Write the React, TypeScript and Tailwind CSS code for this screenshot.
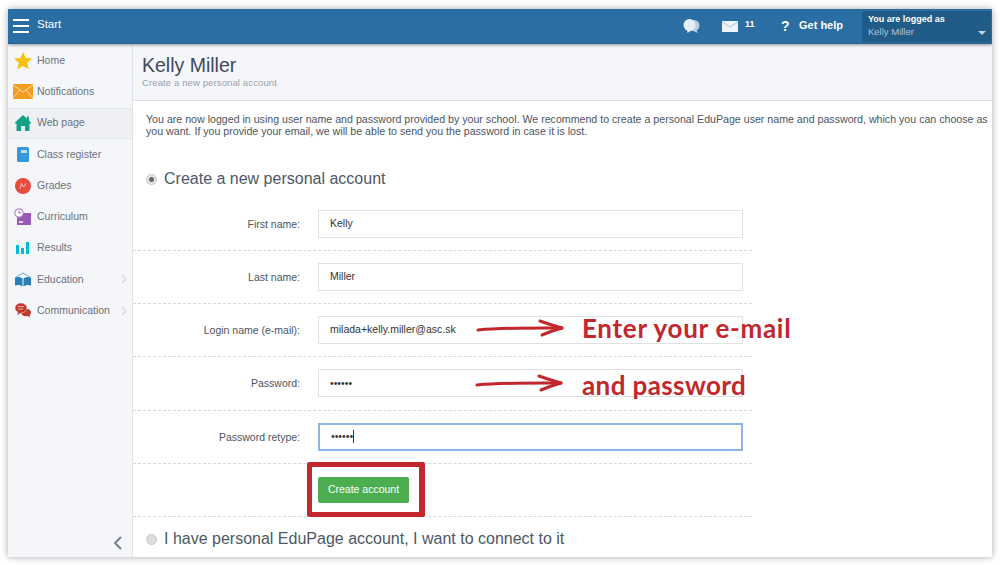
import React from "react";

const F = "font-['Liberation_Sans',Arial,sans-serif]";

function Star() {
  return <svg width="20" height="20" viewBox="0 0 20 20"><path d="M10 1l2.700 6 6.300.6-4.800 4.300 1.500 6.400L10 15l-5.700 3.300 1.500-6.400L1 7.600l6.300-.6z" fill="#f5c211" /></svg>;
}
function Mail() {
  return <svg width="20" height="15" viewBox="0 0 20 15"><rect width="20" height="15" fill="#f39c1f" /><path d="M0 1l10 7 10-7M0 14l7-8M20 14l-7-8" stroke="#fbdca8" strokeWidth="1" fill="none" /></svg>;
}
function House() {
  return <svg width="16" height="16" viewBox="0 0 16 16"><path d="M8 0L0 7.500v1h1.500V16h4.500v-5h4v5h4.500V8.500H16v-1l-2-1.900V1.500h-2v2.200z" fill="#16a085" /><rect x="6.500" y="11" width="3" height="5" fill="#d9efe9" /></svg>;
}
function Book() {
  return <svg width="12" height="15" viewBox="0 0 12 15"><rect x="0" width="12" height="15" rx="1.500" fill="#3498db" /><rect x="4" y="3" width="6" height="3" fill="#bcdcf3" /></svg>;
}
function Grades() {
  return <svg width="16" height="16" viewBox="0 0 16 16"><circle cx="8" cy="8" r="8" fill="#e74c3c" /><path d="M5 11L6.500 5.500l2 3.500L11 5.500" stroke="#f7c1ba" strokeWidth="1" fill="none" /></svg>;
}
function Curriculum() {
  return <svg width="17" height="17" viewBox="0 0 17 17"><rect x="3" y="5" width="14" height="12" fill="#9b59b6" /><rect x="5" y="13" width="4" height="2" fill="#e6d5ee" /><circle cx="5" cy="5" r="4.200" fill="#fff" stroke="#b28ac6" strokeWidth="1.200" /><path d="M5 2.800V5h2" stroke="#9b59b6" strokeWidth="1" fill="none" /></svg>;
}
function Results() {
  return <svg width="13" height="12" viewBox="0 0 13 12"><rect y="3" width="3" height="9" fill="#00bcd4" /><rect x="5" y="6" width="3" height="6" fill="#00bcd4" /><rect x="10" width="3" height="12" fill="#00bcd4" /></svg>;
}
function Education() {
  return <svg width="16" height="15" viewBox="0 0 16 15"><path d="M1 5l7-4 7 4" stroke="#6fa8d2" strokeWidth="1" fill="none" /><path d="M0 5.500c3-1 6-.5 7.500 1v8c-1.500-1.500-4.500-2-7.500-1zM16 5.500c-3-1-6-.5-7.500 1v8c1.500-1.500 4.500-2 7.500-1z" fill="#2980b9" /></svg>;
}
function Comm() {
  return <svg width="16" height="15" viewBox="0 0 16 15"><ellipse cx="11" cy="9.500" rx="5" ry="3.800" fill="#c0392b" /><path d="M12 12l2.500 2.500L15 10z" fill="#c0392b" /><ellipse cx="6" cy="5" rx="6" ry="5" fill="#c0392b" stroke="#f5f6f9" strokeWidth="0.500" /><path d="M3 8.500L2.500 12 7 9z" fill="#c0392b" /><path d="M3 3.500h6M3 6h5" stroke="#eab5ad" strokeWidth="1" /></svg>;
}

const nav = [
  { label: "Home", icon: <Star /> },
  { label: "Notifications", icon: <Mail /> },
  { label: "Web page", icon: <House />, active: true },
  { label: "Class register", icon: <Book /> },
  { label: "Grades", icon: <Grades /> },
  { label: "Curriculum", icon: <Curriculum /> },
  { label: "Results", icon: <Results /> },
  { label: "Education", icon: <Education />, arrow: true },
  { label: "Communication", icon: <Comm />, arrow: true },
];

const fields = [
  { label: "First name:", value: "Kelly" },
  { label: "Last name:", value: "Miller" },
  { label: "Login name (e-mail):", value: "milada+kelly.miller@asc.sk" },
  { label: "Password:", value: "••••••" },
  { label: "Password retype:", value: "••••••", focus: true },
];

function Arrow() {
  return (
    <svg width="90" height="20" viewBox="0 0 90 20" fill="none" stroke="#c1272d" strokeLinecap="round" strokeLinejoin="round">
      <path d="M2 12C30 9.500 60 10 86 10" strokeWidth="3" />
      <path d="M64 3c8 3 15 5 22 7-7 2-13 4-20 7" strokeWidth="3" />
    </svg>
  );
}

export default function App() {
  return (
    <div className={`${F} w-[1000px] h-[565px] bg-white pl-2 pr-2 pt-[9px] pb-2 overflow-hidden`}>
      <div className="relative w-[984px] h-[548px] flex flex-col bg-white shadow-[0_0_7px_rgba(0,0,0,0.35)] overflow-hidden">
        <header className="h-[35px] shrink-0 bg-[#2a6ea3] border-b border-[#245f8d] shadow-[0_1px_3px_rgba(0,0,0,0.4)] z-10 flex items-center text-white">
          <div className="ml-[5px] w-[16px] flex flex-col gap-[4px]">
            <span className="h-[2px] bg-white" />
            <span className="h-[2px] bg-white" />
            <span className="h-[2px] bg-white" />
          </div>
          <span className="ml-[8px] mb-[2px] text-[11.500px]">Start</span>
          <div className="ml-auto flex items-center h-full">
            <svg width="17" height="15" viewBox="0 0 17 15" className="mr-[22px]">
              <circle cx="11" cy="6.500" r="5.500" fill="#b5cfe2" />
              <path d="M13 10l2 4-5-2z" fill="#b5cfe2" />
              <circle cx="6.500" cy="6" r="6" fill="#e6eff5" />
              <path d="M4 10L4.500 14 9 11z" fill="#e6eff5" />
            </svg>
            <svg width="16" height="11" viewBox="0 0 16 11">
              <rect width="16" height="11" fill="#eef4f8" />
              <path d="M0 1l8 5 8-5" stroke="#a9c4d8" strokeWidth="1" fill="none" />
            </svg>
            <span className="ml-[7px] mb-[2px] text-[9px] font-bold w-[36px]">11</span>
            <span className="text-[14px] font-bold w-[18px]">?</span>
            <span className="mb-[2px] text-[11px] font-bold">Get help</span>
            <div className="ml-[19px] mr-[1px] w-[129px] h-[31px] bg-[#215b87] rounded-[2px] px-[6px] pt-[2px] relative">
              <div className="text-[9px] font-bold leading-[12px]">You are logged as</div>
              <div className="text-[9.500px] leading-[13px] text-[#a9c6dc]">Kelly Miller</div>
              <span className="absolute right-[5px] bottom-[7px] w-0 h-0 border-x-[4px] border-x-transparent border-t-[4px] border-t-[#c5d6e3]" />
            </div>
          </div>
        </header>
        <div className="flex flex-1 min-h-0">
          <aside className="relative w-[125px] shrink-0 bg-[#f5f6f9] border-r border-[#dfe2e6] pt-[1px]">
            {nav.map((n) => (
              <div key={n.label} className={`h-[31.250px] flex items-center ${n.active ? "bg-[#eef0f4] border-y border-[#e4e7eb]" : ""}`}>
                <span className="w-[29px] flex justify-center shrink-0">{n.icon}</span>
                <span className="text-[10.500px] text-[#6b7280]">{n.label}</span>
                {n.arrow && (
                  <svg width="6" height="10" viewBox="0 0 6 10" className="ml-auto mr-[5px]" fill="none" stroke="#d5d8dc" strokeWidth="1.200">
                    <path d="M1 1l4 4-4 4" />
                  </svg>
                )}
              </div>
            ))}
            <svg width="10" height="14" viewBox="0 0 10 14" className="absolute right-[9px] bottom-[7px]" fill="none" stroke="#6d7b8a" strokeWidth="1.800">
              <path d="M8 1L2 7l6 6" />
            </svg>
          </aside>
          <main className="flex-1 min-w-0 relative">
            <div className="h-[57px] bg-[#f5f6f9] border-b border-[#dcdfe3] pl-[9px] pt-[10px]">
              <div className="text-[19.500px] leading-[23px] text-[#3f4a59]">Kelly Miller</div>
              <div className="text-[9.500px] leading-[11px] text-[#97a1ad] tracking-[0.120px]">Create a new personal account</div>
            </div>
            <p className="pl-[13px] pr-0 pt-[12px] text-[10.630px] leading-[12px] text-[#4b5563] w-[860px]">
              You are now logged in using user name and password provided by your school. We recommend to create a personal EduPage user name and password, which you can choose as you want. If you provide your email, we will be able to send you the password in case it is lost.
            </p>
            <div className="mt-[32px] pl-[13px] flex items-center h-[20px]">
              <span className="w-[11px] h-[11px] rounded-full bg-[#e4e5e6] border border-[#c8c9cb] flex items-center justify-center">
                <span className="w-[5px] h-[5px] rounded-full bg-[#666]" />
              </span>
              <span className="ml-[7px] text-[16px] text-[#4d5866]">Create a new personal account</span>
            </div>
            <div className="mt-[8.600px] w-[619px]">
              {fields.map((f) => (
                <div key={f.label} className="h-[53.300px] flex items-start pt-[12px] border-b border-dashed border-[#d8d8d8]">
                  <label className="w-[167px] pt-[7px] text-right text-[10.500px] text-[#4b5563]">{f.label}</label>
                  <div className={`ml-[18px] w-[425px] h-[28px] flex items-center px-[11px] text-[10.500px] text-[#333] ${f.focus ? "border-2 border-[#8fb5e8]" : "border border-[#e1e1e1]"}`}>
                    {f.value}
                    {f.focus && <span className="w-px h-[13px] bg-[#333]" />}
                  </div>
                </div>
              ))}
              <div className="h-[53px] border-b border-dashed border-[#d8d8d8] flex items-center pl-[185px]">
                <button className="w-[91px] h-[26px] bg-[#4cae50] rounded-[2px] text-white text-[10.500px]">Create account</button>
              </div>
            </div>
            <div className="mt-[12.400px] pl-[13px] flex items-center h-[20px]">
              <span className="w-[11px] h-[11px] rounded-full bg-[#dcdddf] border border-[#c8c9cb]" />
              <span className="ml-[7px] text-[16px] text-[#4d5866]">I have personal EduPage account, I want to connect to it</span>
            </div>

            {/* hand-drawn annotations over the form */}
            <div className="absolute left-[343px] top-[274px]"><Arrow /></div>
            <div className="absolute left-[342px] top-[329px]"><Arrow /></div>
            <div className="absolute left-[449px] top-[267px] text-[26px] leading-[34px] text-[#c1272d] font-bold font-['Lato',sans-serif] tracking-[0.700px] whitespace-nowrap">Enter your e-mail</div>
            <div className="absolute left-[449px] top-[324px] text-[26px] leading-[34px] text-[#c1272d] font-bold font-['Lato',sans-serif] tracking-[0.400px] whitespace-nowrap">and password</div>
            <div className="absolute left-[174px] top-[418px] w-[118px] h-[55px] border-[5px] border-r-[6px] border-[#c1272d] rounded-[2px]" />
          </main>
        </div>
      </div>
    </div>
  );
}
